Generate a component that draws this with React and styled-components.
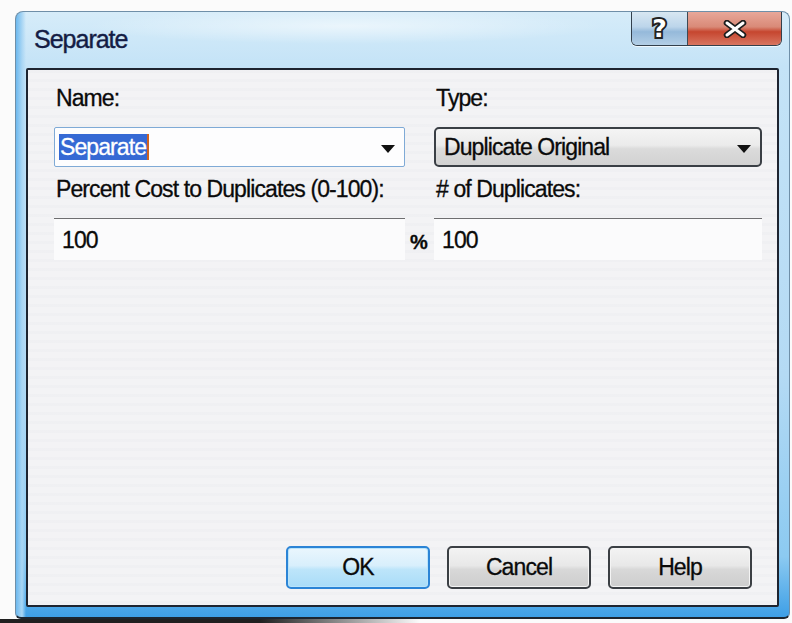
import React from 'react'
import styled, { createGlobalStyle } from 'styled-components'

const GlobalStyle = createGlobalStyle`
	html, body {
		margin: 0;
		padding: 0;
		background: #fbfbfb;
	}
	body {
		font-family: 'Liberation Sans', Arial, sans-serif;
	}
`

const App = () => {
	return (
		<Page>
			<GlobalStyle />
			<Window>
				<TitleBar>
					<Title>Separate</Title>
					<CaptionButtons>
						<CaptionButton $kind="help">?</CaptionButton>
						<CaptionButton $kind="close">
							<svg width="24" height="18" viewBox="0 0 24 18">
								<path
									d="M4 3 L20 15 M20 3 L4 15"
									stroke="#1e1e1e"
									strokeWidth="6.5"
									strokeLinecap="round"
								/>
								<path
									d="M4 3 L20 15 M20 3 L4 15"
									stroke="#fff"
									strokeWidth="3"
									strokeLinecap="round"
								/>
							</svg>
						</CaptionButton>
					</CaptionButtons>
				</TitleBar>
				<Client>
					<Form>
						<Label $top={0}>Name:</Label>
						<span />
						<Label $top={0}>Type:</Label>

						<Combo $focused>
							<Selected>Separate</Selected>
							<Caret />
							<Arrow />
						</Combo>
						<span />
						<Combo>
							<ComboText>Duplicate Original</ComboText>
							<Arrow />
						</Combo>

						<Label $top={9}>Percent Cost to Duplicates (0-100):</Label>
						<span />
						<Label $top={9}># of Duplicates:</Label>

						<Field>100</Field>
						<Unit>%</Unit>
						<Field>100</Field>
					</Form>
					<ButtonRow>
						<Button $default>OK</Button>
						<Button>Cancel</Button>
						<Button>Help</Button>
					</ButtonRow>
				</Client>
			</Window>
		</Page>
	)
}

export default App

const Page = styled.div`
	width: 792px;
	height: 623px;
	box-sizing: border-box;
	padding: 11px 2px 0 15px;
	overflow: hidden;
	background: linear-gradient(to right, #202020 0, #202020 260px, transparent 420px) bottom / 100% 4px no-repeat,
		#fbfbfb;
`

const Window = styled.div`
	width: 775px;
	height: 608px;
	box-sizing: border-box;
	display: flex;
	flex-direction: column;
	padding: 0 10px 10px 10px;
	border: 1px solid #6f8fa8;
	border-bottom: 2px solid #1c2530;
	border-radius: 8px 8px 6px 6px;
	background:
		radial-gradient(ellipse 260px 18px at 330px 14px, rgba(255, 255, 255, 0.55), transparent),
		linear-gradient(to right, #6cb8ee 0, #a9d6f4 6px, transparent 10px),
		linear-gradient(to bottom, #d6ecf9 0%, #c4e3f7 9%, #b4daf4 60%, #8ccaf1 90%, #3e9fe6 100%);
`

const TitleBar = styled.div`
	height: 56px;
	display: flex;
	align-items: flex-start;
	justify-content: space-between;
`

const Title = styled.div`
	margin: 13px 0 0 8px;
	font-size: 25px;
	letter-spacing: -1px;
	color: #141d45;
	-webkit-text-stroke: 0.4px #141d45;
`

const CaptionButtons = styled.div`
	display: flex;
	margin-right: -3px;
	border: 1px solid #33404c;
	border-top: none;
	border-radius: 0 0 6px 6px;
	overflow: hidden;
	box-shadow: 0 1px 0 rgba(255, 255, 255, 0.7);
`

const CaptionButton = styled.div`
	height: 33px;
	width: ${props => (props.$kind === 'close' ? '94px' : '55px')};
	display: flex;
	align-items: center;
	justify-content: center;
	box-sizing: border-box;
	border-left: ${props => (props.$kind === 'close' ? '1px solid #3d4a55' : 'none')};
	font: bold 25px 'DejaVu Sans', sans-serif;
	color: #fff;
	-webkit-text-stroke: 4px #222;
	paint-order: stroke fill;
	background: ${props =>
		props.$kind === 'close'
			? 'linear-gradient(to bottom, #e8a799 0%, #d98a78 45%, #c6462f 60%, #d87560 100%)'
			: 'linear-gradient(to bottom, #d8e7f2 0%, #bcd5ea 45%, #95b9da 60%, #b3cfe6 100%)'};
`

const Client = styled.div`
	flex: 1;
	display: flex;
	flex-direction: column;
	justify-content: space-between;
	border: 2px solid #1d2430;
	border-radius: 2px;
	padding: 15px 15px 16px 26px;
	background:
		repeating-linear-gradient(to bottom, rgba(200, 205, 215, 0.08) 0 3px, transparent 3px 9px),
		#f3f3f5;
`

const Form = styled.div`
	display: grid;
	grid-template-columns: 351px 29px 1fr;
	align-items: start;
	color: #0a0a0a;
	font-size: 23px;
	letter-spacing: -0.9px;
	line-height: 26px;
	-webkit-text-stroke: 0.3px #0a0a0a;
`

const Label = styled.div`
	padding-top: ${props => props.$top}px;
	height: 26px;
	margin-bottom: 16px;
	padding-left: 2px;
`

const Combo = styled.div`
	height: 40px;
	box-sizing: border-box;
	display: flex;
	align-items: center;
	padding: 0 9px 0 4px;
	border: ${props => (props.$focused ? '1.5px solid #7faad6' : '2px solid #3a3f45')};
	border-radius: ${props => (props.$focused ? '2px' : '5px')};
	background: ${props =>
		props.$focused
			? '#fdfdfe'
			: 'linear-gradient(to bottom, #f4f4f4 0%, #ebebeb 45%, #dbdbdb 55%, #d2d2d2 100%)'};
`

const Selected = styled.span`
	background: #3569d4;
	color: #fff;
	-webkit-text-stroke: 0.3px #fff;
	padding: 0 1px;
	line-height: 26px;
`

const Caret = styled.span`
	width: 2px;
	height: 26px;
	background: #d0621e;
`

const ComboText = styled.span`
	padding-left: 4px;
`

const Arrow = styled.span`
	margin-left: auto;
	width: 0;
	height: 0;
	border-left: 7px solid transparent;
	border-right: 7px solid transparent;
	border-top: 8px solid #111;
	margin-top: 3px;
`

const Field = styled.div`
	height: 42px;
	box-sizing: border-box;
	display: flex;
	align-items: center;
	padding-left: 8px;
	border-top: 1.5px solid #6e6e70;
	background: #fbfbfc;
`

const Unit = styled.div`
	height: 42px;
	display: flex;
	align-items: center;
	padding: 6px 0 0 5px;
	box-sizing: border-box;
	font-weight: bold;
	font-size: 20px;
`

const ButtonRow = styled.div`
	display: flex;
	justify-content: flex-end;
	gap: 17px;
	padding-right: 10px;
`

const Button = styled.div`
	width: 144px;
	height: 43px;
	box-sizing: border-box;
	display: flex;
	align-items: center;
	justify-content: center;
	font-size: 23px;
	letter-spacing: -0.9px;
	color: #0a0a0a;
	-webkit-text-stroke: 0.3px #0a0a0a;
	border: ${props => (props.$default ? '2.5px solid #2b84d6' : '2px solid #3b3f44')};
	border-radius: 5px;
	box-shadow: inset 0 0 0 1px ${props => (props.$default ? '#b9e4fb' : '#f4f4f4')};
	background: ${props =>
		props.$default
			? 'linear-gradient(to bottom, #eaf6fd 0%, #d8effc 45%, #bde5fa 55%, #a9dcf8 100%)'
			: 'linear-gradient(to bottom, #f3f3f3 0%, #e8e8e8 45%, #d8d8d8 55%, #cdcdcd 100%)'};
`
